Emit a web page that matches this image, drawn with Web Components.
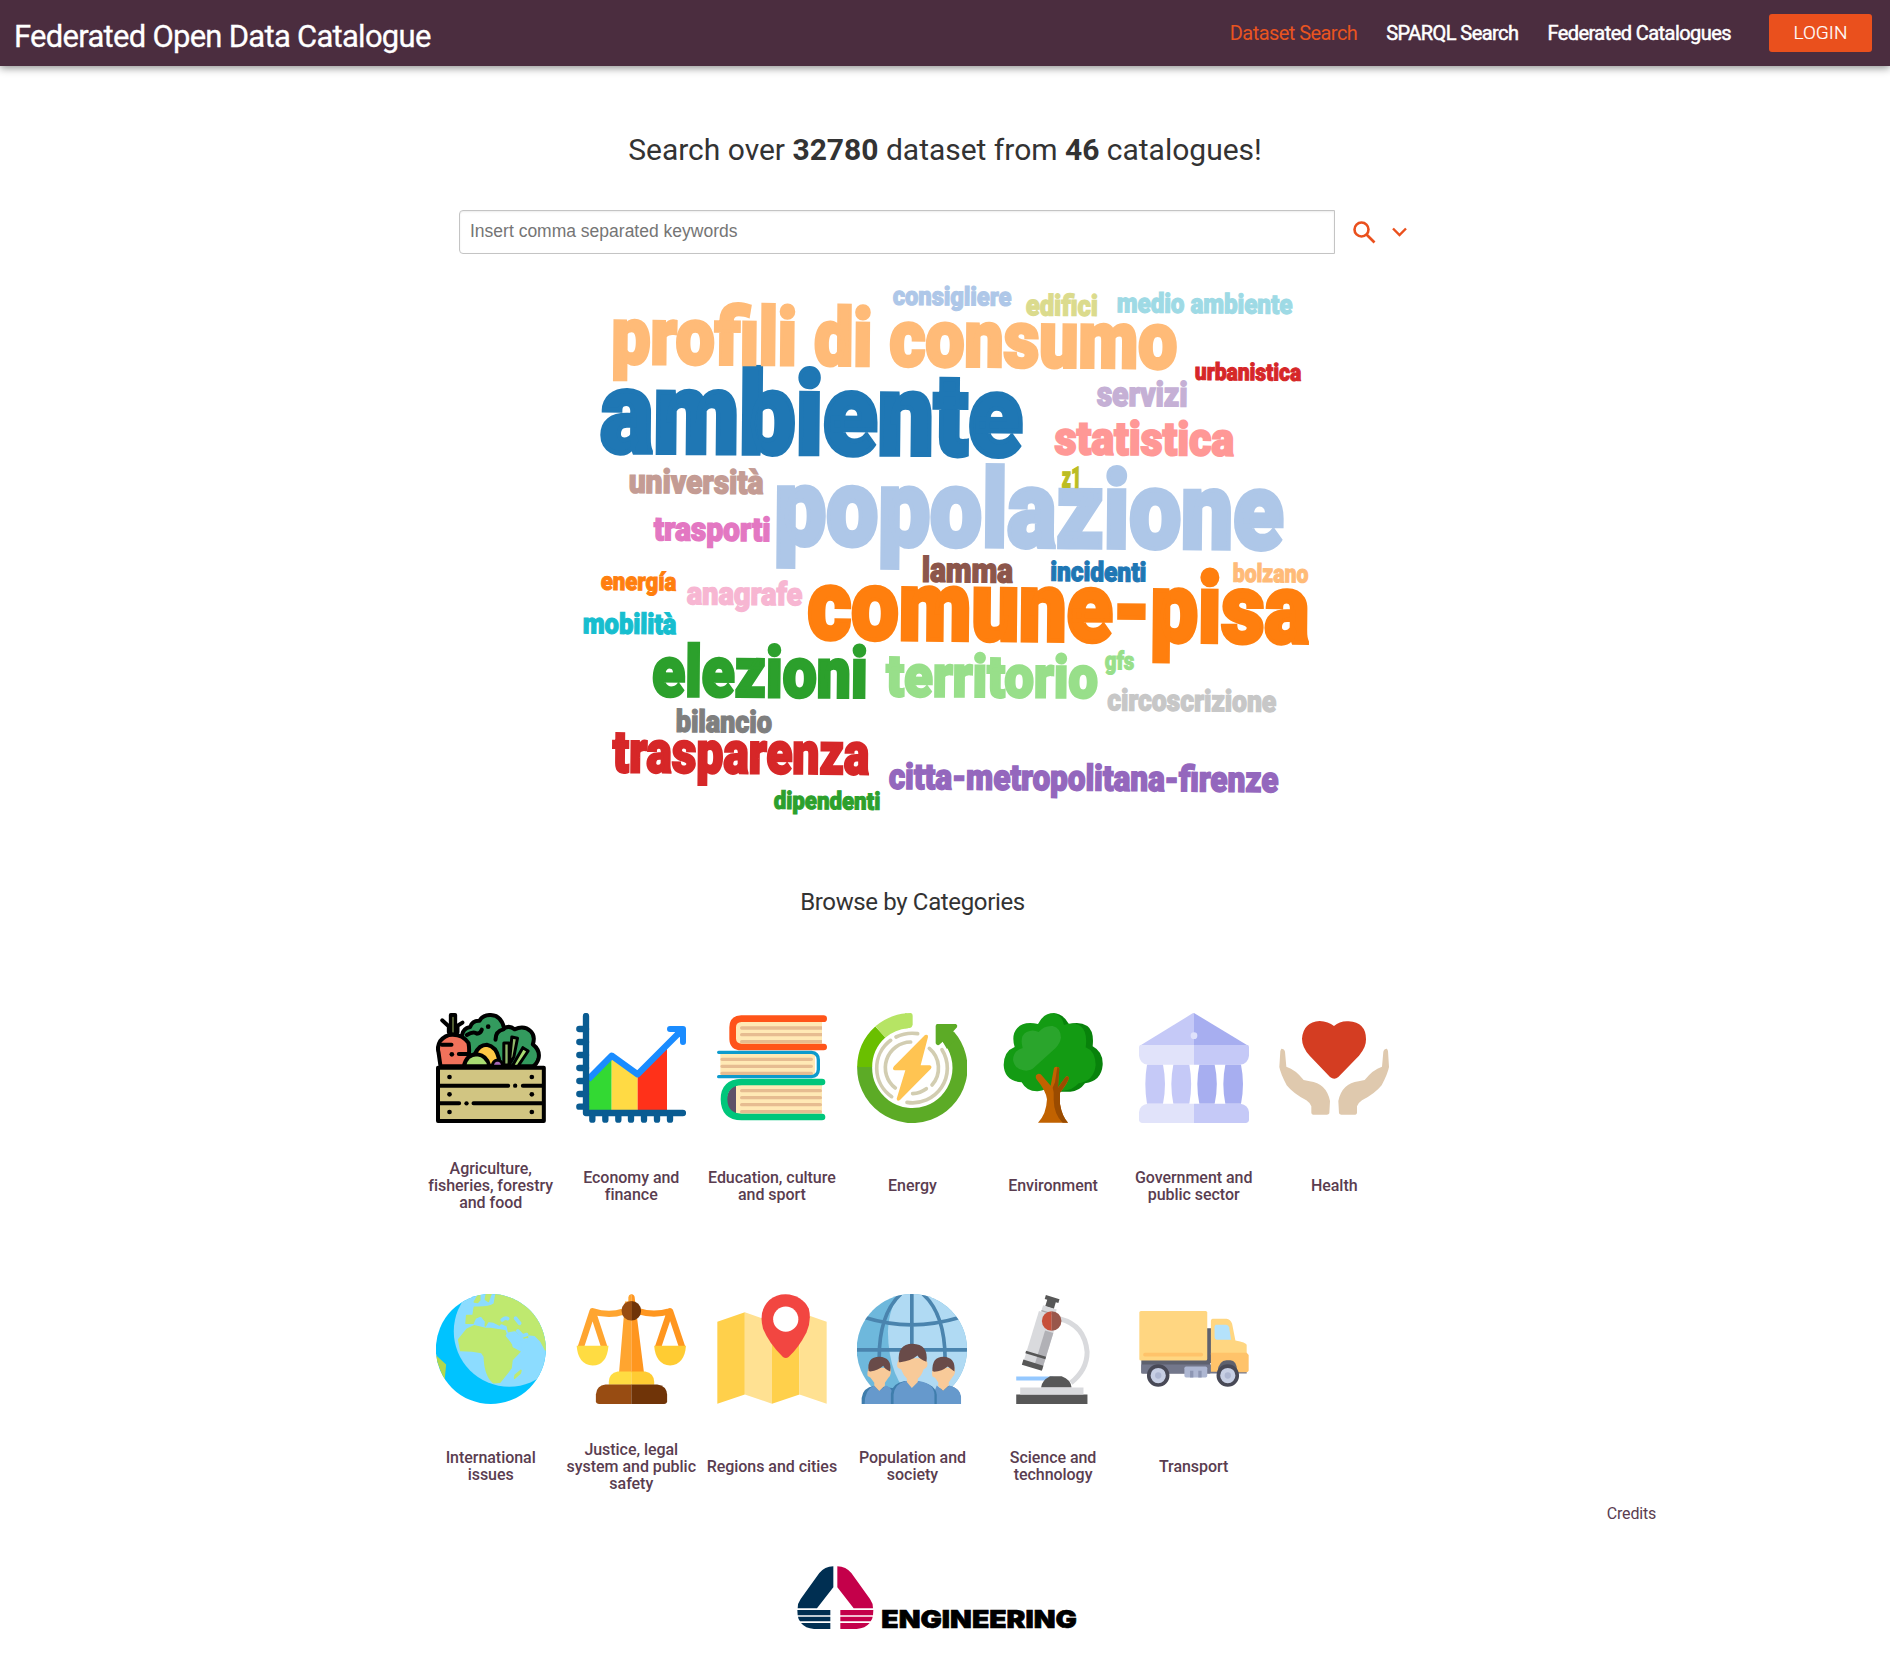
<!DOCTYPE html>
<html lang="en">
<head>
<meta charset="utf-8">
<title>Federated Open Data Catalogue</title>
<style>
body{margin:0;background:#fff;font-family:Roboto,"Liberation Sans",sans-serif;color:#333}
</style>
</head>
<body>
<portal-page></portal-page>
<script>
const define=(name,html,setup)=>customElements.define(name,class extends HTMLElement{
  connectedCallback(){
    if(this.shadowRoot)return;
    const t=document.createElement('template');
    t.innerHTML=html;
    this.attachShadow({mode:'open'}).append(t.content.cloneNode(true));
    if(setup)setup(this,this.shadowRoot);
  }
});

/* Category pictures: [viewBox, markup] */
const ICONS={
agriculture:['47.5 42 330 330',`
<g stroke="#000" stroke-width="12" stroke-linejoin="round" stroke-linecap="round">
<path fill="#339a5e" d="M125 110Q128 88 150 84Q156 64 178 65Q188 47 212 48Q243 49 252 88Q268 78 283 91Q312 78 332 97Q346 111 338 136Q361 154 355 179Q350 196 338 202H150Z"/>
<path fill="none" d="M140 108Q160 96 170 104Q181 104 185 92M226 122Q226 96 250 91"/>
<path fill="#5f6d3b" d="M92 104V48H105V104Z"/><path fill="none" d="M66 64L88 84M127 71L106 84M86 100V84M112 100V84"/><path stroke="#5f6d3b" stroke-width="5" d="M98.500 56V98"/>
<path fill="#f1725b" d="M61 202L55 160Q50 142 60 126Q76 106 98 107Q128 107 145 132Q150 158 142 202Z"/>
<path fill="none" d="M65 137H94M116 165H140"/>
<path fill="#ffc845" d="M164 165Q177 137 200 137Q228 142 236 178V202H164Z"/>
<path fill="#a9db72" d="M131 202Q139 166 171 166Q201 170 208 202Z"/>
<path fill="#a768b8" d="M216 202Q218 184 232 183Q246 184 248 202Z" stroke-width="9"/>
<g stroke-width="9"><path fill="#92b96b" d="M251 198V132H267V198Z"/><path fill="#92b96b" d="M275 114L292 118L281 174L267 198Z"/><path fill="#a9db72" d="M308 146L324 156L293 202H276Z"/></g>
<path fill="#d1c582" d="M53.5 206H371V366H53.5Z"/>
<path fill="none" d="M56 260H264M308 260H368M56 313H117M160 313H368"/></g>
<g><circle cx="95" cy="166" r="7"/><circle cx="204" cy="83" r="7"/><circle cx="88" cy="234" r="7"/><circle cx="335" cy="234" r="7"/><circle cx="88" cy="286" r="7"/><circle cx="335" cy="286" r="7"/><circle cx="88" cy="339" r="7"/><circle cx="335" cy="339" r="7"/><circle cx="285" cy="260" r="6.500"/><circle cx="139" cy="313" r="6.500"/></g>`],
economy:['468 42 330 330',`
<path fill="#33d933" d="M507 240L575 175V334H507Z"/><path fill="#ffda44" d="M575 175L653 232V334H575Z"/><path fill="#ff3119" d="M653 232L741 148V334H653Z"/>
<path fill="none" stroke="#1a8cff" stroke-width="19" stroke-linejoin="round" d="M505 241L575 170L653 226L782 97"/>
<path fill="none" stroke="#1a8cff" stroke-width="18" stroke-linecap="round" stroke-linejoin="round" d="M750 90H789V129"/><path fill="#1a8cff" d="M755 90H790V125Z"/>
<g fill="none" stroke="#0a5c92" stroke-width="19" stroke-linecap="round" stroke-linejoin="round"><path d="M498 51V342H789"/>
<path d="M478 90H498M478 129H498M478 168H498M478 207H498M478 246H498M478 285H498M478 323H498M517 345V362M556 345V362M595 345V362M633 345V362M672 345V362M711 345V362M750 345V362"/></g>`],
education:['891 42 330 330',`
<path fill="#ffe9b5" d="M945 68H1206V135H945Z"/><path fill="none" stroke="#ff5419" stroke-width="20" stroke-linecap="round" d="M1211 59H964Q938 60 938 85V120Q939 143 964 144H1211"/>
<path fill="none" stroke="#e6bc91" stroke-width="10" stroke-linecap="round" d="M965 87H1206M965 107H1206M965 128H1206"/><path fill="#fff" d="M1206 70h7v63h-7zM1206 262h7v81h-7z"/>
<path fill="#ffe9b5" d="M901 163H1185V230H901Z"/><path fill="none" stroke="#e6bc91" stroke-width="10" stroke-linecap="round" d="M906 181H1174M906 202H1174M906 223H1174"/><path fill="none" stroke="#0c9bcd" stroke-width="10" stroke-linecap="round" d="M896 160H1174Q1195 162 1195 182V212Q1194 231 1174 233H896"/>
<path fill="#5d5168" d="M950 258H960V345H950Q919 337 919 302Q922 267 950 258Z"/><path fill="#ffe9b5" d="M948 258H1206V345H948Z"/><path fill="none" stroke="#e6bc91" stroke-width="10" stroke-linecap="round" d="M965 275H1201M965 296H1201M965 317H1201M965 338H1201"/><path fill="none" stroke="#00c67b" stroke-width="20" stroke-linecap="round" d="M1206 249H965Q912 251 912 301Q913 354 965 354H1206"/>`],
energy:['52 42 330 330',`
<g fill="none" stroke-width="45"><path stroke="#5cab26" d="M326 113A143 143 0 1 1 75 203"/><path stroke="#6abf00" d="M75 204A143 143 0 0 1 122 99"/><path stroke="#b6e464" d="M122 99A143 143 0 0 1 203 65"/></g>
<path fill="#b6e464" d="M196 43L214 42Q219 44 219 50V77Q218 84 211 87L196 88Z"/><path fill="#5cab26" d="M291 75H349Q355 79 352 85L341 97L350 120L322 150L309 128L298 138Q290 140 288 133V80Z"/>
<g fill="none" stroke="#d2cdb1" stroke-width="11" stroke-linecap="round"><path d="M153 124A104 104 0 0 0 156 293M169 114Q200 99 234 104M307 152A104 104 0 0 1 202 310M213 129A77 77 0 0 0 167 267M269 148A77 77 0 0 1 277 258M260 269Q242 282 219 284"/></g>
<path fill="#ffc452" d="M256 108Q266 105 265 114L243 199H270Q279 202 273 210L181 303Q172 309 171 299L197 214H165Q156 212 163 202Z"/>`],
environment:['474 42 330 330',`
<path fill="#08820b" d="M640 43Q671 44 687 76Q718 66 742 81Q763 96 758 142Q790 159 788 198Q784 246 735 253Q717 278 691 278H640Z"/>
<path fill="#139b13" d="M594 75Q610 42 642 42Q666 49 672 78Q703 67 724 83Q743 100 737 145Q766 156 767 198Q762 246 716 253Q696 275 670 275Q650 274 640 258Q619 273 593 277Q560 278 545 250Q493 246 491 198Q492 156 524 144Q513 107 532 87Q551 66 594 75Z"/>
<path fill="#2aa52c" d="M596 99Q612 79 638 81Q663 88 663 116Q660 133 646 148L583 205Q570 218 550 214Q525 211 519 183Q520 155 548 147Q538 110 560 99Q578 90 596 99Z"/>
<path fill="#c16200" d="M594 371Q619 346 621 301Q619 277 589 240Q583 227 596 224Q603 224 607 231L632 260L642 207Q647 201 656 205L658 207L654 265L675 236Q681 228 687 236Q686 249 660 281V315Q666 352 684 371Z"/>
<path fill="#9a4b00" d="M652 204Q659 204 658 209L654 266L675 236Q684 229 687 237Q681 253 660 281V315Q666 352 684 371H668Q642 346 641 302V280L638 266L645 250Z" />`],
government:['87 42 330 330',`
<path fill="#c5c9f7" d="M87 142L248 43L252 42V142Z"/><path fill="#a7aef0" d="M252 42L417 142H252Z"/><path fill="#e1e3fa" d="M91 138H252V197H114Q90 195 87 170V143Z"/><path fill="#c5c9f7" d="M252 138H414L417 143V170Q414 195 390 197H252Z"/><circle cx="252" cy="110" r="10" fill="#dfe1fb"/>
<path fill="#c5c9f7" d="M111 197H159Q171 255 159 314H111Q101 255 111 197ZM190 197H238Q249 255 238 314H190Q178 255 190 197Z"/><path fill="#a7aef0" d="M268 197H314Q327 255 314 314H268Q256 255 268 197ZM346 197H393Q405 255 393 314H346Q334 255 346 197Z"/>
<path fill="#e1e3fa" d="M252 314H113Q89 317 87 340V363Q88 371 97 372H252Z"/><path fill="#c5c9f7" d="M252 314H391Q415 317 417 340V363Q416 371 407 372H252Z"/>`],
health:['508 42 330 330',`
<path fill="#d43d22" d="M673 81Q691 65 717 67Q769 70 769 121Q770 145 748 170L686 234Q674 245 661 234L600 170Q577 145 577 119Q581 69 630 66Q656 67 673 81Z"/>
<path fill="#dfc9ae" d="M515 149Q524 149 526 158L530 203Q558 212 582 243L600 247Q650 253 661 306L659 343Q657 347 652 347H610Q605 346 605 341V322Q602 312 590 304Q551 284 531 259Q512 222 509 204L512 156Z"/>
<path transform="matrix(-1 0 0 1 1347 0)" fill="#dfc9ae" d="M515 149Q524 149 526 158L530 203Q558 212 582 243L600 247Q650 253 661 306L659 343Q657 347 652 347H610Q605 346 605 341V322Q602 312 590 304Q551 284 531 259Q512 222 509 204L512 156Z"/>`],
international:['46.5 42 331 331',`
<defs><clipPath id="globe"><circle cx="211.500" cy="207.500" r="165.500"/></clipPath></defs><g clip-path="url(#globe)"><path fill="#00c3ff" d="M40 35h345v345h-345z"/><circle cx="267" cy="154" r="167" fill="#8cdcff"/>
<g fill="#bfe96f" stroke="#bfe96f" stroke-width="5" stroke-linejoin="round"><path d="M228 38L222 72Q205 84 162 82L158 107H139L137 130H158L165 114L182 107L196 125L195 138L203 124L220 126L238 135L260 135L265 155L285 151L315 177L322 172L320 164L344 166L362 184L376 210L390 200V40Z"/><path d="M161 138L195 146L210 146L254 153L260 172L280 207H300L298 216L275 240L272 265L239 307L220 309Q194 289 192 230L184 218L155 213L121 212L115 179L140 148Z"/><path d="M285 286L302 272L300 280L283 295ZM178 38L162 66L172 67L178 60ZM198 43L195 58L204 64L212 42Z"/></g>
<g fill="none" stroke="#8cdcff" stroke-linecap="round" stroke-width="11"><path d="M246 120Q255 112 262 116M286 115L298 130M262 167L285 195L318 180M293 153L307 168L319 164M244 139L252 143M282 198L300 208"/></g>
<path fill="#b0d84f" d="M40 220L77 254L72 306Z"/></g>`],
justice:['467 42 330 332',`
<g fill="none" stroke-width="19" stroke-linejoin="round"><path stroke="#ffa530" d="M480 204L516 94L552 204M516 94Q565 110 610 95"/><path stroke="#ff961f" d="M713 204L750 94L787 204M750 94Q700 108 655 94"/></g>
<path fill="#ffa530" d="M633 42Q624 45 624 52V65H614L596 278H633Z"/><path fill="#ff961f" d="M633 42Q643 45 643 52L651 120L671 278H633Z"/><path fill="#ffdc42" d="M468 198H564Q560 256 516 258Q472 255 468 198Z"/><path fill="#ffcc33" d="M702 198H798Q794 254 750 258Q706 254 702 198Z"/>
<path fill="#984c12" d="M633 63A29.500 29.500 0 0 0 633 122Z"/><path fill="#703408" d="M633 63A29.500 29.500 0 0 1 633 122Z"/>
<path fill="#ffdc42" d="M633 276H592Q566 281 565 307V316H633Z"/><path fill="#ffcc33" d="M633 276H675Q701 281 702 307V316H633Z"/><path fill="#984c12" d="M633 315H555Q528 318 526 345V366Q527 374 536 374H633Z"/><path fill="#703408" d="M633 315H711Q739 319 741 345V366Q740 374 732 374H633Z"/>`],
regions:['891 42 330 332',`
<path fill="#ffd04b" d="M891 126L974 97V345L891 373ZM1056 126L1139 97V345L1056 373Z"/><path fill="#ffe192" d="M974 97L1056 126V373L974 345ZM1139 97L1221 126V373L1139 345Z"/>
<path fill="#f24641" d="M1097 43Q1146 45 1167 86Q1176 122 1160 158Q1136 205 1106 232Q1098 239 1089 232Q1048 193 1029 147Q1014 93 1048 60Q1069 43 1097 43Z"/><circle cx="1097.500" cy="118" r="38" fill="#fff"/>`],
population:['52 42 331 331',`
<defs><clipPath id="world"><circle cx="217" cy="208" r="166"/></clipPath></defs><g clip-path="url(#world)"><path fill="#6eb8dc" d="M45 35h345v345h-345z"/><path fill="#b0daf3" d="M190 35Q149 70 145 155Q147 300 225 360H390V35Z"/><g fill="none" stroke="#4a84ae" stroke-width="11"><path d="M217 36V375M45 210H390M76 113Q215 157 360 113M184 42Q115 105 119 250M250 42Q320 105 317 250"/></g></g>
<g><path fill="#3f7dac" d="M104 318Q69 324 66 355V373H200V330ZM324 318L270 340V373H365V352Q360 321 324 318Z"/><path fill="#6699cc" d="M103 317L119 334L139 317Q163 324 167 373H75Q75 330 103 317ZM292 317L311 333L330 317Q363 325 365 352V373H270Z"/><path fill="#f8ca99" d="M88 264Q81 278 84 289L92 293L104 309V318L119 334L136 317V309L147 293Q158 284 152 264ZM282 264Q275 278 279 290L287 294L297 309L296 318L311 333L328 317V308L340 291Q350 282 345 264Z"/><path fill="#694b49" d="M87 274Q81 231 119 231Q158 233 152 275Q136 269 131 258Q116 272 92 275ZM279 274Q277 231 312 231Q350 233 345 275L325 260Q308 274 284 276Z"/>
<path fill="#3f7dac" d="M195 304Q157 311 154 342V373H292V345Q288 313 240 306Z"/><path fill="#6699cc" d="M198 304H238Q283 311 285 344V373H162V345Q165 313 198 304Z"/><path fill="#f8ca99" d="M181 235Q168 251 175 264L185 269Q191 286 202 296V307L217 325L235 307V296Q247 287 252 269Q266 264 264 249L257 235Z"/><path fill="#694b49" d="M178 247Q172 193 219 192Q268 194 261 246Q241 239 234 227Q214 244 182 247Z"/></g>`],
science:['474 42 330 332',`
<path fill="none" stroke="#d9dadd" stroke-width="15" d="M660 117Q735 136 742 217Q742 271 693 310"/>
<g transform="rotate(17 607 155)"><path fill="#575757" d="M585 47H628V59H620V80H593V59H585Z"/><path fill="#d9dadd" d="M586 79H629V100H586Z"/><path fill="#a8a8ac" d="M586 94H629V98H586Z"/><path fill="#d9dadd" d="M579 99H640V267H579Z"/><path fill="#b1b1b6" d="M614 150H640V267H614Z"/><path fill="#575757" d="M577 225H640V233H577ZM577 253H640V269H577Z"/></g>
<path fill="#c7503a" d="M635 94A29 29 0 0 0 635 153Z"/><path fill="#99574b" d="M635 94A29 29 0 0 1 635 153Z"/>
<path fill="#94c8ff" d="M528 291H640V303H528Z"/><path fill="#575757" d="M603 324Q605 303 630 290H665Q693 300 695 324ZM528 345H743V374H528Z"/><path fill="#d9dadd" d="M540 324H731V345H540Z"/>`],
transport:['897 42 330 332',`
<path fill="#5e616e" d="M903 240H1111V282H903ZM1101 145H1115V250H1101Z"/><path fill="#73778b" d="M903 255H1221V282H907Q903 281 903 276Z"/><rect x="897" y="93" width="205" height="150" rx="5" fill="#ffd681"/><path stroke="#ffc36a" stroke-width="11" stroke-linecap="round" d="M914 225H1084"/>
<path fill="#ffd681" d="M1118 117H1160Q1172 119 1177 132L1187 182Q1219 188 1221 195V225H1113V123Q1113 118 1118 117Z"/><path fill="#ffc36a" d="M1113 219H1221L1227 226V273Q1226 278 1220 278H1193Q1190 254 1164 253Q1137 256 1133 277H1113Z"/><path fill="#5e616e" d="M1133 275Q1138 243 1160 242H1172Q1190 242 1193 275Z"/><path fill="#b4e2fb" d="M1127 135H1159Q1166 136 1168 142L1174 180H1130Q1124 178 1124 172V140Z"/>
<rect x="1033" y="261" width="69" height="33" rx="5" fill="#aeb7d2"/><path stroke="#8d96b3" stroke-width="10" d="M1055 294V274M1080 294V274"/>
<g stroke="#484956" stroke-width="11" fill="#c7cfe4"><circle cx="954" cy="288" r="28.500"/><circle cx="1164" cy="288" r="28.500"/></g><g fill="#aeb7d2"><circle cx="954" cy="288" r="9.500"/><circle cx="1164" cy="288" r="9.500"/></g>`]
};

/* text, left, right, baseline, ascender height, colour; later words lie on top */
const WORDS=[
['ambiente',601,1021,453.500,86,'#1f77b4'],['popolazione',775,1282,546,81,'#aec7e8'],['comune-pisa',808,1308,640,73,'#ff7f0e'],
['profili di consumo',612,1176,364.500,60,'#ffbb78'],['elezioni',652.500,866.500,697,53,'#2ca02c'],['territorio',886.500,1097,697,44,'#98df8a'],
['trasparenza',613,868.500,773,44,'#d62728'],['statistica',1055,1233.500,455,35,'#ff9896'],['citta-metropolitana-firenze',889,1278,789.500,27,'#9467bd'],
['servizi',1097,1187,406.500,26,'#c5b0d5'],['lamma',922,1012.500,582.500,26,'#8c564b'],['università',629,763,493.500,25,'#c49c94'],
['trasporti',654,770,541,25,'#e377c2'],['anagrafe',687,802,605,24,'#f7b6d2'],['bilancio',676,771.500,732.500,23,'#7f7f7f'],
['circoscrizione',1107.500,1276,711,22.500,'#c7c7c7'],['z1',1062,1081,488,22,'#bcbd22'],['edifici',1026,1097.500,316,22,'#dbdb8d'],
['mobilità',583,676,634,21.500,'#17becf'],['medio ambiente',1117,1292,313,20.500,'#9edae5'],['incidenti',1050.500,1146,581.500,20.500,'#1f77b4'],
['consigliere',893,1011,305.500,19.500,'#aec7e8'],['energía',601,676,590.500,19,'#ff7f0e'],['bolzano',1233,1308,582.500,19,'#ffbb78'],
['gfs',1105,1134,670,19,'#98df8a'],['dipendenti',774,880,809.500,18.500,'#2ca02c'],['urbanistica',1195,1301,380.500,18,'#d62728']];

define('nav-link',`<style>:host{display:block;color:#fff;-webkit-text-stroke:.5px currentColor;font-size:20px;line-height:24px;letter-spacing:-.56px;white-space:nowrap}:host([active]){color:#e95420;-webkit-text-stroke:0}</style><slot></slot>`);

define('login-button',`<style>:host{display:block}button{display:block;width:103px;height:38px;border:0;border-radius:3px;background:#ea501d;color:#fff;font:300 19px/38px Roboto,sans-serif;padding:0;-webkit-text-stroke:.2px #fff}</style><button><slot></slot></button>`);

define('portal-header',`<style>:host{display:flex;position:relative;height:66px;background:#4b2d3f;box-shadow:0 2px 8px rgba(0,0,0,.45);justify-content:space-between;box-sizing:border-box;padding:0 18px 0 14px}
h1{margin:19px 0 0;color:#fff;font:400 31px/36px Roboto,sans-serif;letter-spacing:-.73px;-webkit-text-stroke:.3px #fff;white-space:nowrap}
nav{display:flex;gap:29px;padding-top:21px}.right{display:flex;gap:38px}login-button{margin-top:14px}</style>
<h1>Federated Open Data Catalogue</h1><div class="right"><nav><nav-link active>Dataset Search</nav-link><nav-link>SPARQL Search</nav-link><nav-link>Federated Catalogues</nav-link></nav><login-button>LOGIN</login-button></div>`);

define('search-bar',`<style>:host{display:flex;height:44px;margin-left:459px;align-items:center}
input{box-sizing:border-box;width:876px;height:44px;border:1px solid #c4c4c4;border-radius:4px 0 0 4px;box-shadow:inset 0 1px 2px rgba(0,0,0,.08);padding:0 10px 2px;font:17.500px "Liberation Sans",sans-serif;outline:0}input::placeholder{color:#757575;opacity:1}
svg{display:block}.s{margin-left:18px}.c{margin-left:16px}</style>
<input placeholder="Insert comma separated keywords"><svg class="s" width="23" height="23" viewBox="0 0 23 23" fill="none" stroke="#ea501d" stroke-width="2.600"><circle cx="8.500" cy="8.500" r="7"/><path d="M13.500 13.500L21.500 21.500"/></svg><svg class="c" width="15" height="10" viewBox="0 0 15 10" fill="none" stroke="#ea501d" stroke-width="2.400"><path d="M1 1.500L7.500 8L14 1.500"/></svg>`);

define('word-cloud',`<style>:host{display:block;width:760px;height:560px}svg{display:block;overflow:visible}text{font-family:Roboto,"Liberation Sans",sans-serif;font-weight:900;stroke-linejoin:miter}</style><svg width="760" height="560" viewBox="570 270 760 560"></svg>`,(el,root)=>{
  const svg=root.querySelector('svg');
  for(const [word,left,right,base,asc,color] of WORDS){
    const t=document.createElementNS('http://www.w3.org/2000/svg','text');
    const size=asc/.75;
    const attrs={'font-size':size.toFixed(1),fill:color,stroke:color,'stroke-width':(size*.042).toFixed(2)};
    for(const k in attrs)t.setAttribute(k,attrs[k]);
    t.textContent=word;
    svg.append(t);
    /* condense the face to the word's own width, less its side bearings */
    const bearing=size*.02;
    const squeeze=(right-left)/(t.getComputedTextLength()-bearing*1.2);
    t.setAttribute('transform',`translate(${left} ${base-.4-size*.01}) rotate(.5) scale(${squeeze.toFixed(4)} 1) translate(${(-bearing*.5).toFixed(2)} 0)`);
  }
});

define('category-icon',`<style>:host{display:block;width:110px;height:110px}svg{display:block}</style>`,(el,root)=>{
  const [box,markup]=ICONS[el.getAttribute('name')];
  const t=document.createElement('template');
  t.innerHTML=`<svg width="110" height="110" viewBox="${box}">${markup}</svg>`;
  root.append(t.content);
});

define('category-card',`<style>:host{display:flex;flex-direction:column;align-items:center;height:198.500px}
.label{display:flex;align-items:center;justify-content:center;height:51px;margin-top:37px;text-align:center;font-size:16px;letter-spacing:-.04px;line-height:17px;font-weight:500;color:#5a3d50;white-space:nowrap}</style><div class="label"><span><slot></slot></span></div>`,(el,root)=>{
  const icon=document.createElement('category-icon');
  icon.setAttribute('name',el.getAttribute('icon'));
  root.querySelector('.label').before(icon);
});

define('category-grid',`<style>:host{display:grid;grid-template-columns:repeat(7,140.600px);row-gap:81.800px}</style><slot></slot>`);

define('company-logo',`<style>:host{display:block;width:290px;height:64px}svg{display:block;overflow:visible}text{font-family:Inter,"Liberation Sans",sans-serif;font-weight:900}</style>
<svg width="280" height="64" viewBox="80 80 840 192"><path fill="#002f52" d="M189 81V144L140 207H82Q81 193 91 179L147 101Q163 82 189 81ZM81 212H180V228H82ZM83 232H180V246H89Q84 240 83 232ZM92 251H180V269H131Q105 267 92 251Z"/><path fill="#c4004a" d="M201 81V144L250 207H308Q309 193 299 179L243 101Q227 82 201 81ZM309 212H210V228H308ZM307 232H210V246H301Q306 240 307 232ZM298 251H210V269H259Q285 267 298 251Z"/><text font-size="74" fill="#000" stroke="#000" stroke-width="2">ENGINEERING</text></svg>`,(el,root)=>{
  const t=root.querySelector('text');
  t.setAttribute('transform',`translate(333 267) scale(${(587/t.getComputedTextLength()).toFixed(4)} 1)`);
});

define('portal-footer',`<style>:host{display:flex;flex-direction:column}.credits{align-self:flex-end;margin-right:234px;font-size:16px;line-height:20px;color:#5a3d50;letter-spacing:-.2px}company-logo{margin:42px 0 0 797px}</style><div class="credits">Credits</div><company-logo></company-logo>`);

define('portal-page',`<style>:host{display:flex;flex-direction:column;min-height:1678px}
h2{margin:66px 0 0;text-align:center;font:400 30px/36px Roboto,sans-serif;letter-spacing:-.01px;color:#333}h2 b{font-weight:700}
search-bar{margin-top:42px}word-cloud{margin:16px 0 0 570px}
section{width:984.200px;margin:57px 0 0 420.400px}h3{margin:0 0 95.400px;text-align:center;font:400 24px/31px Roboto,sans-serif;letter-spacing:-.36px;color:#333}portal-footer{margin-top:11.800px}</style>
<portal-header></portal-header><h2>Search over <b>32780</b> dataset from <b>46</b> catalogues!</h2><search-bar></search-bar><word-cloud></word-cloud>
<section><h3>Browse by Categories</h3><category-grid>
<category-card icon="agriculture">Agriculture,<br>fisheries, forestry<br>and food</category-card>
<category-card icon="economy">Economy and<br>finance</category-card>
<category-card icon="education">Education, culture<br>and sport</category-card>
<category-card icon="energy">Energy</category-card>
<category-card icon="environment">Environment</category-card>
<category-card icon="government">Government and<br>public sector</category-card>
<category-card icon="health">Health</category-card>
<category-card icon="international">International<br>issues</category-card>
<category-card icon="justice">Justice, legal<br>system and public<br>safety</category-card>
<category-card icon="regions">Regions and cities</category-card>
<category-card icon="population">Population and<br>society</category-card>
<category-card icon="science">Science and<br>technology</category-card>
<category-card icon="transport">Transport</category-card>
</category-grid></section><portal-footer></portal-footer>`);
</script>
</body>
</html>
